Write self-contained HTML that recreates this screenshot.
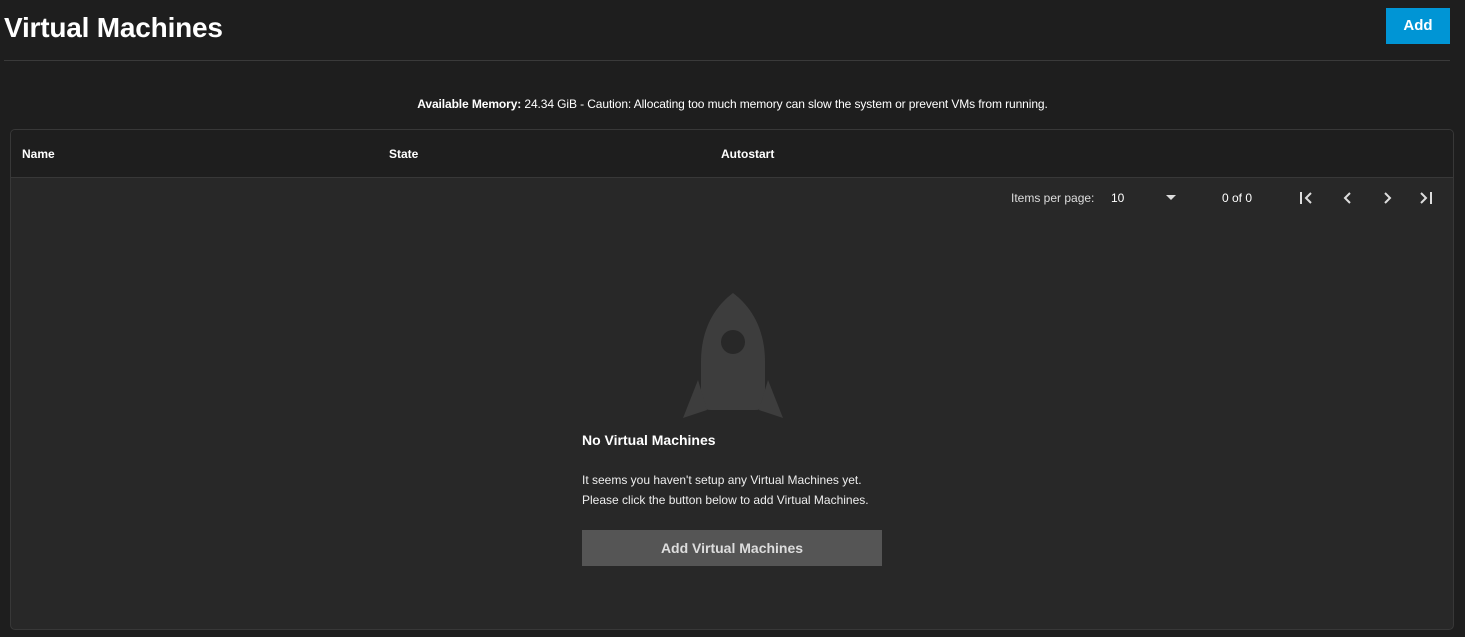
<!DOCTYPE html>
<html><head><style>
*{margin:0;padding:0;box-sizing:border-box}
body{width:1465px;height:637px;background:#1e1e1e;font-family:"Liberation Sans",sans-serif;color:#fff;position:relative;overflow:hidden}
.a{position:absolute}
h1{position:absolute;left:4px;top:12px;font-size:28px;font-weight:bold;letter-spacing:-0.2px}
.btn{left:1386px;top:8px;width:64px;height:36px;background:#0095d5;font-weight:bold;font-size:15px;text-align:center;line-height:36px}
.line{left:4px;top:60px;width:1446px;height:1px;background:#3a3a3a}
.mem{left:0;width:1465px;top:97px;text-align:center;font-size:12px;letter-spacing:-0.1px}
.card{left:10px;top:129px;width:1444px;height:501px;background:#282828;border:1px solid #383838;border-radius:5px;overflow:hidden}
.hdr{left:0;top:0;width:100%;height:48px;background:#1e1e1e;border-bottom:1px solid #383838;font-size:12px;font-weight:bold}
.t{font-size:12px}
</style></head><body>
<h1>Virtual Machines</h1>
<div class="a btn">Add</div>
<div class="a line"></div>
<div class="a mem"><b>Available Memory:</b> 24.34 GiB - Caution: Allocating too much memory can slow the system or prevent VMs from running.</div>
<div class="a card">
 <div class="a hdr">
  <span class="a" style="left:11px;top:17px">Name</span>
  <span class="a" style="left:378px;top:17px">State</span>
  <span class="a" style="left:710px;top:17px">Autostart</span>
 </div>
 <span class="a t" style="left:1000px;top:61px;color:#ddd">Items per page:</span>
 <span class="a t" style="left:1100px;top:61px">10</span>
 <svg class="a" style="left:1155px;top:65px" width="12" height="6"><path d="M0 0h10L5 5z" fill="#ddd"/></svg>
 <span class="a t" style="left:1211px;top:61px">0 of 0</span>
 <svg class="a" style="left:1288px;top:60px" width="150" height="16" fill="none" stroke="#ddd" stroke-width="2">
  <path d="M2 2v12M12 3l-5 5 5 5"/>
  <path d="M51 3l-5 5 5 5"/>
  <path d="M86 3l5 5-5 5"/>
  <path d="M122 3l5 5-5 5M132 2v12"/>
 </svg>
 <svg class="a" style="left:670px;top:162px" width="104" height="128">
  <path d="M52 1C40 10 20 30 20 70V108Q20 118 30 118H74Q84 118 84 108V70C84 30 64 10 52 1Z" fill="#3d3d3d"/>
  <circle cx="52" cy="50" r="12" fill="#282828"/>
  <path d="M17 88L2 126L26 118Z M87 88L102 126L78 118Z" fill="#3d3d3d"/>
 </svg>
 <div class="a" style="left:571px;top:302px;font-size:14px;font-weight:bold">No Virtual Machines</div>
 <div class="a t" style="left:571px;top:340px;line-height:20px;color:#eee">It seems you haven't setup any Virtual Machines yet.<br>Please click the button below to add Virtual Machines.</div>
 <div class="a" style="left:571px;top:400px;width:300px;height:36px;background:#555;text-align:center;line-height:36px;font-weight:bold;font-size:14px;color:#ddd">Add Virtual Machines</div>
</div>
</body></html>
